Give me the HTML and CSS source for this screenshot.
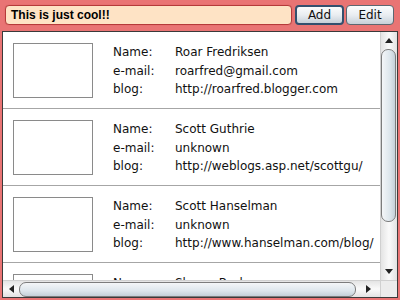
FILE: index.html
```html
<!DOCTYPE html>
<html lang="en">
<head>
  <meta charset="UTF-8">
  <title>People</title>
  <link rel="stylesheet" href="styles.css">
</head>
<body>

  <div class="toolbar">
    <div class="note">This is just cool!!</div>
    <button class="btn btn-add">Add</button>
    <button class="btn btn-edit">Edit</button>
  </div>

  <div class="listbox">
    <div class="viewport">
      <div class="item">
        <div class="thumb"></div>
        <div class="fields">
          <span>Name:</span><span>Roar Fredriksen</span>
          <span>e-mail:</span><span>roarfred@gmail.com</span>
          <span>blog:</span><span>http://roarfred.blogger.com</span>
        </div>
      </div>
      <div class="item">
        <div class="thumb"></div>
        <div class="fields">
          <span>Name:</span><span>Scott Guthrie</span>
          <span>e-mail:</span><span>unknown</span>
          <span>blog:</span><span>http://weblogs.asp.net/scottgu/</span>
        </div>
      </div>
      <div class="item">
        <div class="thumb"></div>
        <div class="fields">
          <span>Name:</span><span>Scott Hanselman</span>
          <span>e-mail:</span><span>unknown</span>
          <span>blog:</span><span>http://www.hanselman.com/blog/</span>
        </div>
      </div>
      <div class="item">
        <div class="thumb"></div>
        <div class="fields">
          <span>Name:</span><span>Shawn Burke</span>
          <span>e-mail:</span><span>unknown</span>
          <span>blog:</span><span>http://blogs.msdn.com/sburke/</span>
        </div>
      </div>
    </div>

    <div class="vscroll">
      <div class="arrow arrow-up"></div>
      <div class="vtrack"><div class="vthumb"></div></div>
      <div class="arrow arrow-down"></div>
    </div>

    <div class="hscroll">
      <div class="arrow arrow-left"></div>
      <div class="hthumb"></div>
      <div class="arrow arrow-right"></div>
    </div>

    <div class="corner"></div>
  </div>

</body>
</html>
```

FILE: styles.css
```css
body {
  margin: 0;
  width: 400px;
  height: 300px;
  background: #e97474;
  font-family: 'DejaVu Sans', sans-serif;
  font-size: 12px;
  color: #111;
  overflow: hidden;
}

.toolbar {
  display: flex;
  align-items: center;
  height: 20px;
  padding: 5px 6px 0 5px;
}

.note {
  flex: 1;
  height: 20px;
  box-sizing: border-box;
  margin-right: 3px;
  padding-left: 5px;
  background: #fee3c5;
  border: 1px solid #b53a3a;
  border-radius: 4px;
  font-family: 'Liberation Sans', sans-serif;
  font-weight: bold;
  font-size: 12px;
  line-height: 19px;
  color: #000;
  box-shadow: 0 0 1px #c55;
}

.btn {
  height: 20px;
  box-sizing: border-box;
  padding: 0;
  font-family: 'DejaVu Sans', sans-serif;
  font-size: 12px;
  color: #111;
  background: linear-gradient(#fbfcfd, #e9edf1 50%, #c7d0d9);
  border: 1px solid #5d6771;
  border-radius: 4px;
}

.btn-add {
  width: 49px;
  margin-right: 2px;
  border: 2px solid #34506e;
}

.btn-edit {
  width: 48px;
}

.listbox {
  display: grid;
  grid-template-columns: 1fr 17px;
  grid-template-rows: 1fr 17px;
  width: 396px;
  height: 267px;
  box-sizing: border-box;
  margin: 6px 0 0 2px;
  background: #fff;
  border: 1px solid #3a3a3a;
}

.viewport {
  overflow: hidden;
}

.item {
  display: flex;
  height: 55px;
  padding: 11px 0 10px 10px;
  border-bottom: 1px solid #a6a6a6;
}

.thumb {
  width: 80px;
  height: 55px;
  box-sizing: border-box;
  border: 1px solid #8a8a8a;
  flex-shrink: 0;
}

.fields {
  display: grid;
  grid-template-columns: 62px auto;
  align-content: start;
  margin-left: 20px;
  line-height: 18.5px;
  white-space: nowrap;
}

.vscroll {
  display: flex;
  flex-direction: column;
  background: linear-gradient(90deg, #e4e4e4, #fafafa 50%, #e2e2e2);
  border-left: 1px solid #d0d0d0;
}

.vtrack {
  flex: 1;
  padding-top: 1px;
}

.vthumb {
  height: 173px;
  margin: 0 1px 0 0;
  box-sizing: border-box;
  border: 1px solid #7c7c7c;
  border-radius: 7px;
  background: linear-gradient(90deg, #f4f6f8, #dde6ec 60%, #c4d0d8);
}

.hscroll {
  display: flex;
  align-items: center;
  background: linear-gradient(#e4e4e4, #fafafa 50%, #e2e2e2);
  border-top: 1px solid #d0d0d0;
}

.hthumb {
  width: 337px;
  height: 15px;
  box-sizing: border-box;
  border: 1px solid #7c7c7c;
  border-radius: 7px;
  background: linear-gradient(#f4f6f8, #dde6ec 60%, #c4d0d8);
}

.arrow {
  display: flex;
  align-items: center;
  justify-content: center;
  flex-shrink: 0;
}

.arrow::after {
  content: "";
  width: 0;
  height: 0;
  border: 4px solid transparent;
}

.arrow-up {
  height: 16px;
}

.arrow-up::after {
  border-top: 0;
  border-bottom: 5px solid #222;
}

.arrow-down {
  height: 18px;
}

.arrow-down::after {
  border-bottom: 0;
  border-top: 5px solid #222;
}

.arrow-left {
  width: 16px;
}

.arrow-left::after {
  border-left: 0;
  border-right: 5px solid #222;
}

.arrow-right {
  width: 24px;
}

.arrow-right::after {
  border-right: 0;
  border-left: 5px solid #222;
}

.corner {
  background: #ececec;
  border-top: 1px solid #d0d0d0;
  border-left: 1px solid #d0d0d0;
}
```
